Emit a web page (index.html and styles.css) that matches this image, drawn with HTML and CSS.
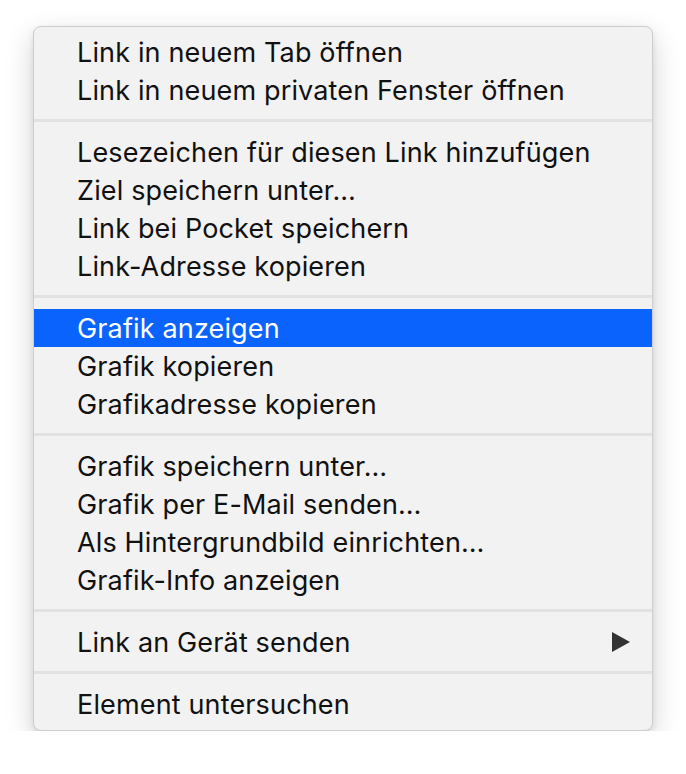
FILE: index.html
```html
<!DOCTYPE html>
<html lang="de">
<head>
    <meta charset="UTF-8">
    <meta name="viewport" content="width=device-width, initial-scale=1.0">
    <title>Kontextmenü</title>
    <link rel="stylesheet" href="styles.css">
</head>
<body>
    <div class="menu">
        <div class="menu-item">Link in neuem Tab öffnen</div>
        <div class="menu-item">Link in neuem privaten Fenster öffnen</div>
        <div class="separator"></div>
        <div class="menu-item">Lesezeichen für diesen Link hinzufügen</div>
        <div class="menu-item">Ziel speichern unter…</div>
        <div class="menu-item">Link bei Pocket speichern</div>
        <div class="menu-item">Link-Adresse kopieren</div>
        <div class="separator"></div>
        <div class="menu-item active">Grafik anzeigen</div>
        <div class="menu-item">Grafik kopieren</div>
        <div class="menu-item">Grafikadresse kopieren</div>
        <div class="separator"></div>
        <div class="menu-item">Grafik speichern unter…</div>
        <div class="menu-item">Grafik per E-Mail senden…</div>
        <div class="menu-item">Als Hintergrundbild einrichten…</div>
        <div class="menu-item">Grafik-Info anzeigen</div>
        <div class="separator"></div>
        <div class="menu-item submenu">
            <span>Link an Gerät senden</span>
            <div class="arrow"></div>
        </div>
        <div class="separator"></div>
        <div class="menu-item">Element untersuchen</div>
    </div>
</body>
</html>
```

FILE: styles.css
```css
body {
    margin: 0;
    padding: 26px 0 0 33px;
    background-color: #fff;
    font-family: Inter, "Liberation Sans", Arial, sans-serif;
}
.menu {
    width: 618px;
    background-color: #f2f2f2;
    border: 1px solid #cdcdcd;
    border-radius: 8px;
    padding: 6px 0 7px;
    box-shadow: 0 10px 28px rgba(0, 0, 0, 0.18), 0 2px 6px rgba(0, 0, 0, 0.08);
}
.menu-item {
    height: 38px;
    display: flex;
    align-items: center;
    justify-content: space-between;
    padding: 0 22px 0 43px;
    font-size: 27px;
    letter-spacing: 0.15px;
    color: #111;
    white-space: nowrap;
}
.menu-item.active {
    background-color: #0a63fd;
    color: #fff;
}
.separator {
    height: 3px;
    margin: 10px 0 11px;
    background-color: #e2e2e2;
}
.arrow {
    width: 0;
    height: 0;
    border-top: 10px solid transparent;
    border-bottom: 10px solid transparent;
    border-left: 18px solid #333;
}
```
